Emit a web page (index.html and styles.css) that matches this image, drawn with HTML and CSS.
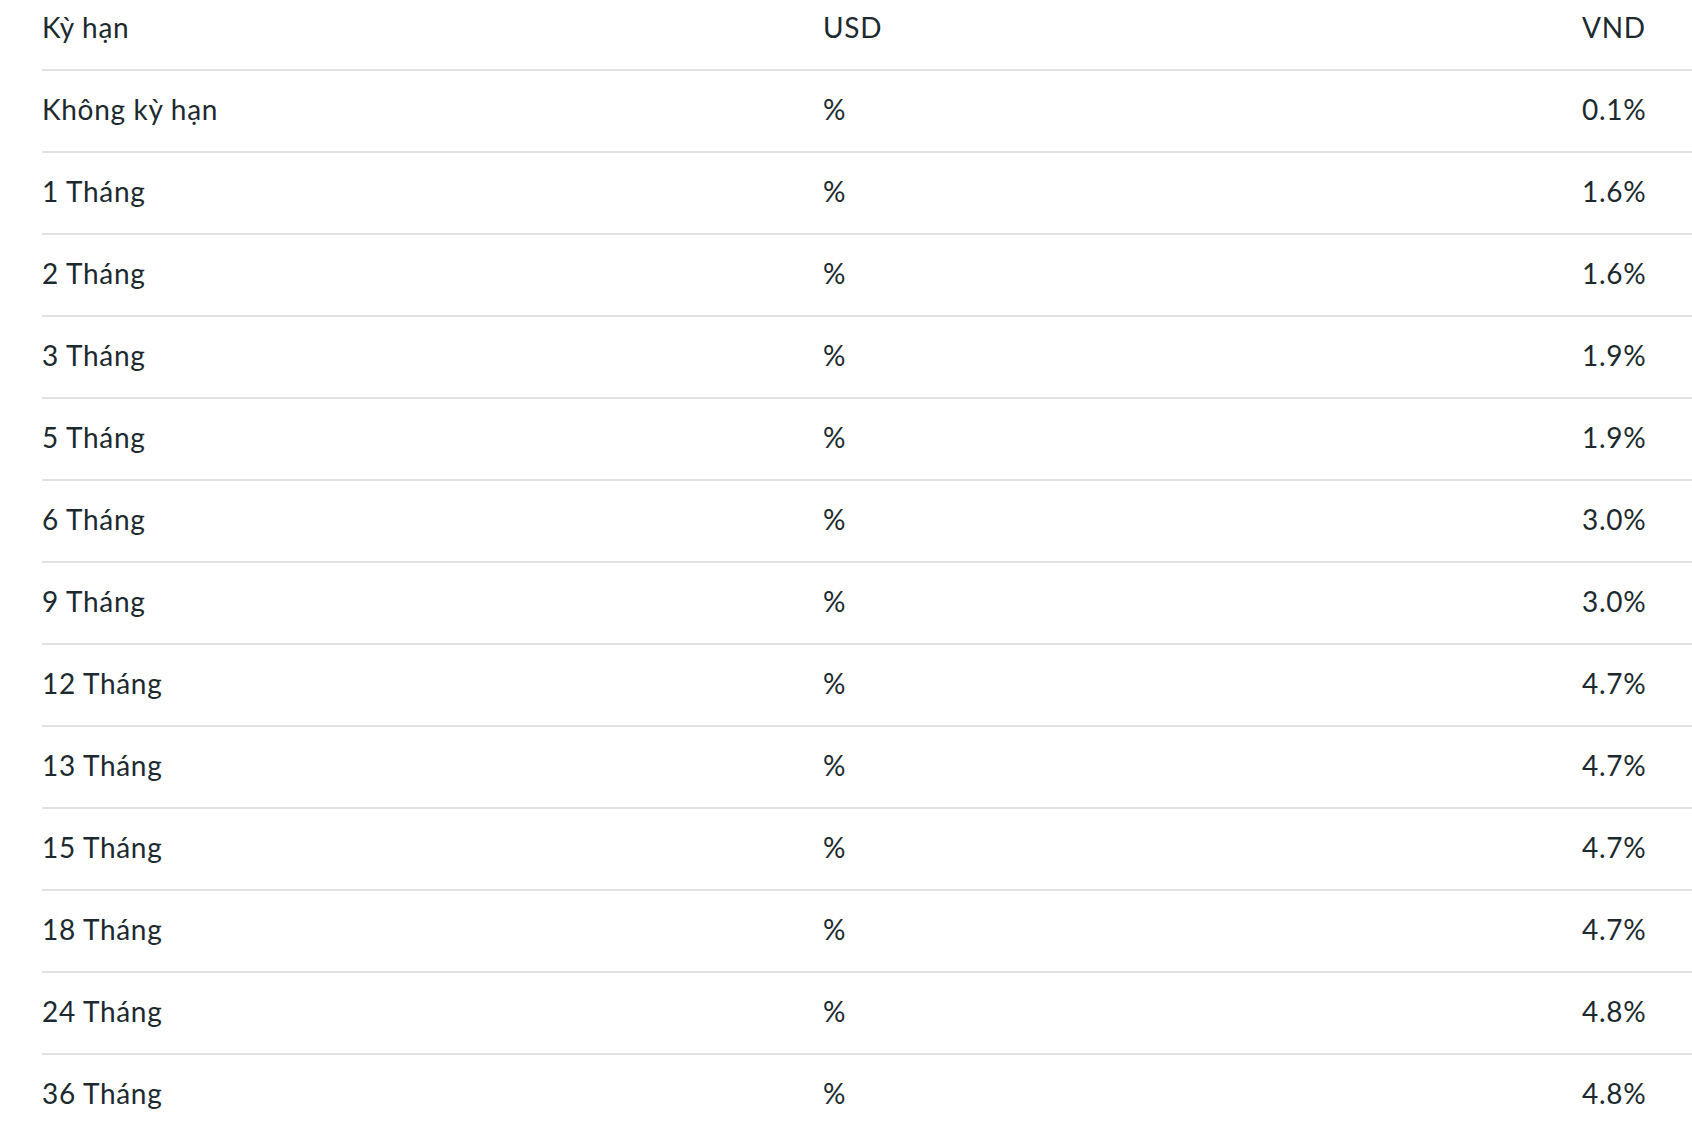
FILE: index.html
```html
<!DOCTYPE html>
<html lang="vi">
<head>
<meta charset="utf-8">
<link rel="stylesheet" href="styles.css">
</head>
<body>
<div class="rates">
  <div class="row head"><div>Kỳ hạn</div><div>USD</div><div>VND</div></div>
  <div class="row"><div>Không kỳ hạn</div><div>%</div><div>0.1%</div></div>
  <div class="row"><div>1 Tháng</div><div>%</div><div>1.6%</div></div>
  <div class="row"><div>2 Tháng</div><div>%</div><div>1.6%</div></div>
  <div class="row"><div>3 Tháng</div><div>%</div><div>1.9%</div></div>
  <div class="row"><div>5 Tháng</div><div>%</div><div>1.9%</div></div>
  <div class="row"><div>6 Tháng</div><div>%</div><div>3.0%</div></div>
  <div class="row"><div>9 Tháng</div><div>%</div><div>3.0%</div></div>
  <div class="row"><div>12 Tháng</div><div>%</div><div>4.7%</div></div>
  <div class="row"><div>13 Tháng</div><div>%</div><div>4.7%</div></div>
  <div class="row"><div>15 Tháng</div><div>%</div><div>4.7%</div></div>
  <div class="row"><div>18 Tháng</div><div>%</div><div>4.7%</div></div>
  <div class="row"><div>24 Tháng</div><div>%</div><div>4.8%</div></div>
  <div class="row"><div>36 Tháng</div><div>%</div><div>4.8%</div></div>
</div>
</body>
</html>
```
FILE: styles.css
```css
html, body {
  margin: 0;
  padding: 0;
  background: #ffffff;
  overflow: hidden;
}
.rates {
  padding-left: 42px;
  font-family: "Lato", "Noto Sans", sans-serif;
  font-size: 28px;
  letter-spacing: 0.7px;
  color: #1c2a2f;
}
.row {
  display: grid;
  grid-template-columns: 781px 759px 1fr;
  line-height: 34px;
  padding: 21px 0 25px;
  border-bottom: 2px solid #e1e1e1;
}
.row.head {
  padding: 10px 0 25px;
}
```
